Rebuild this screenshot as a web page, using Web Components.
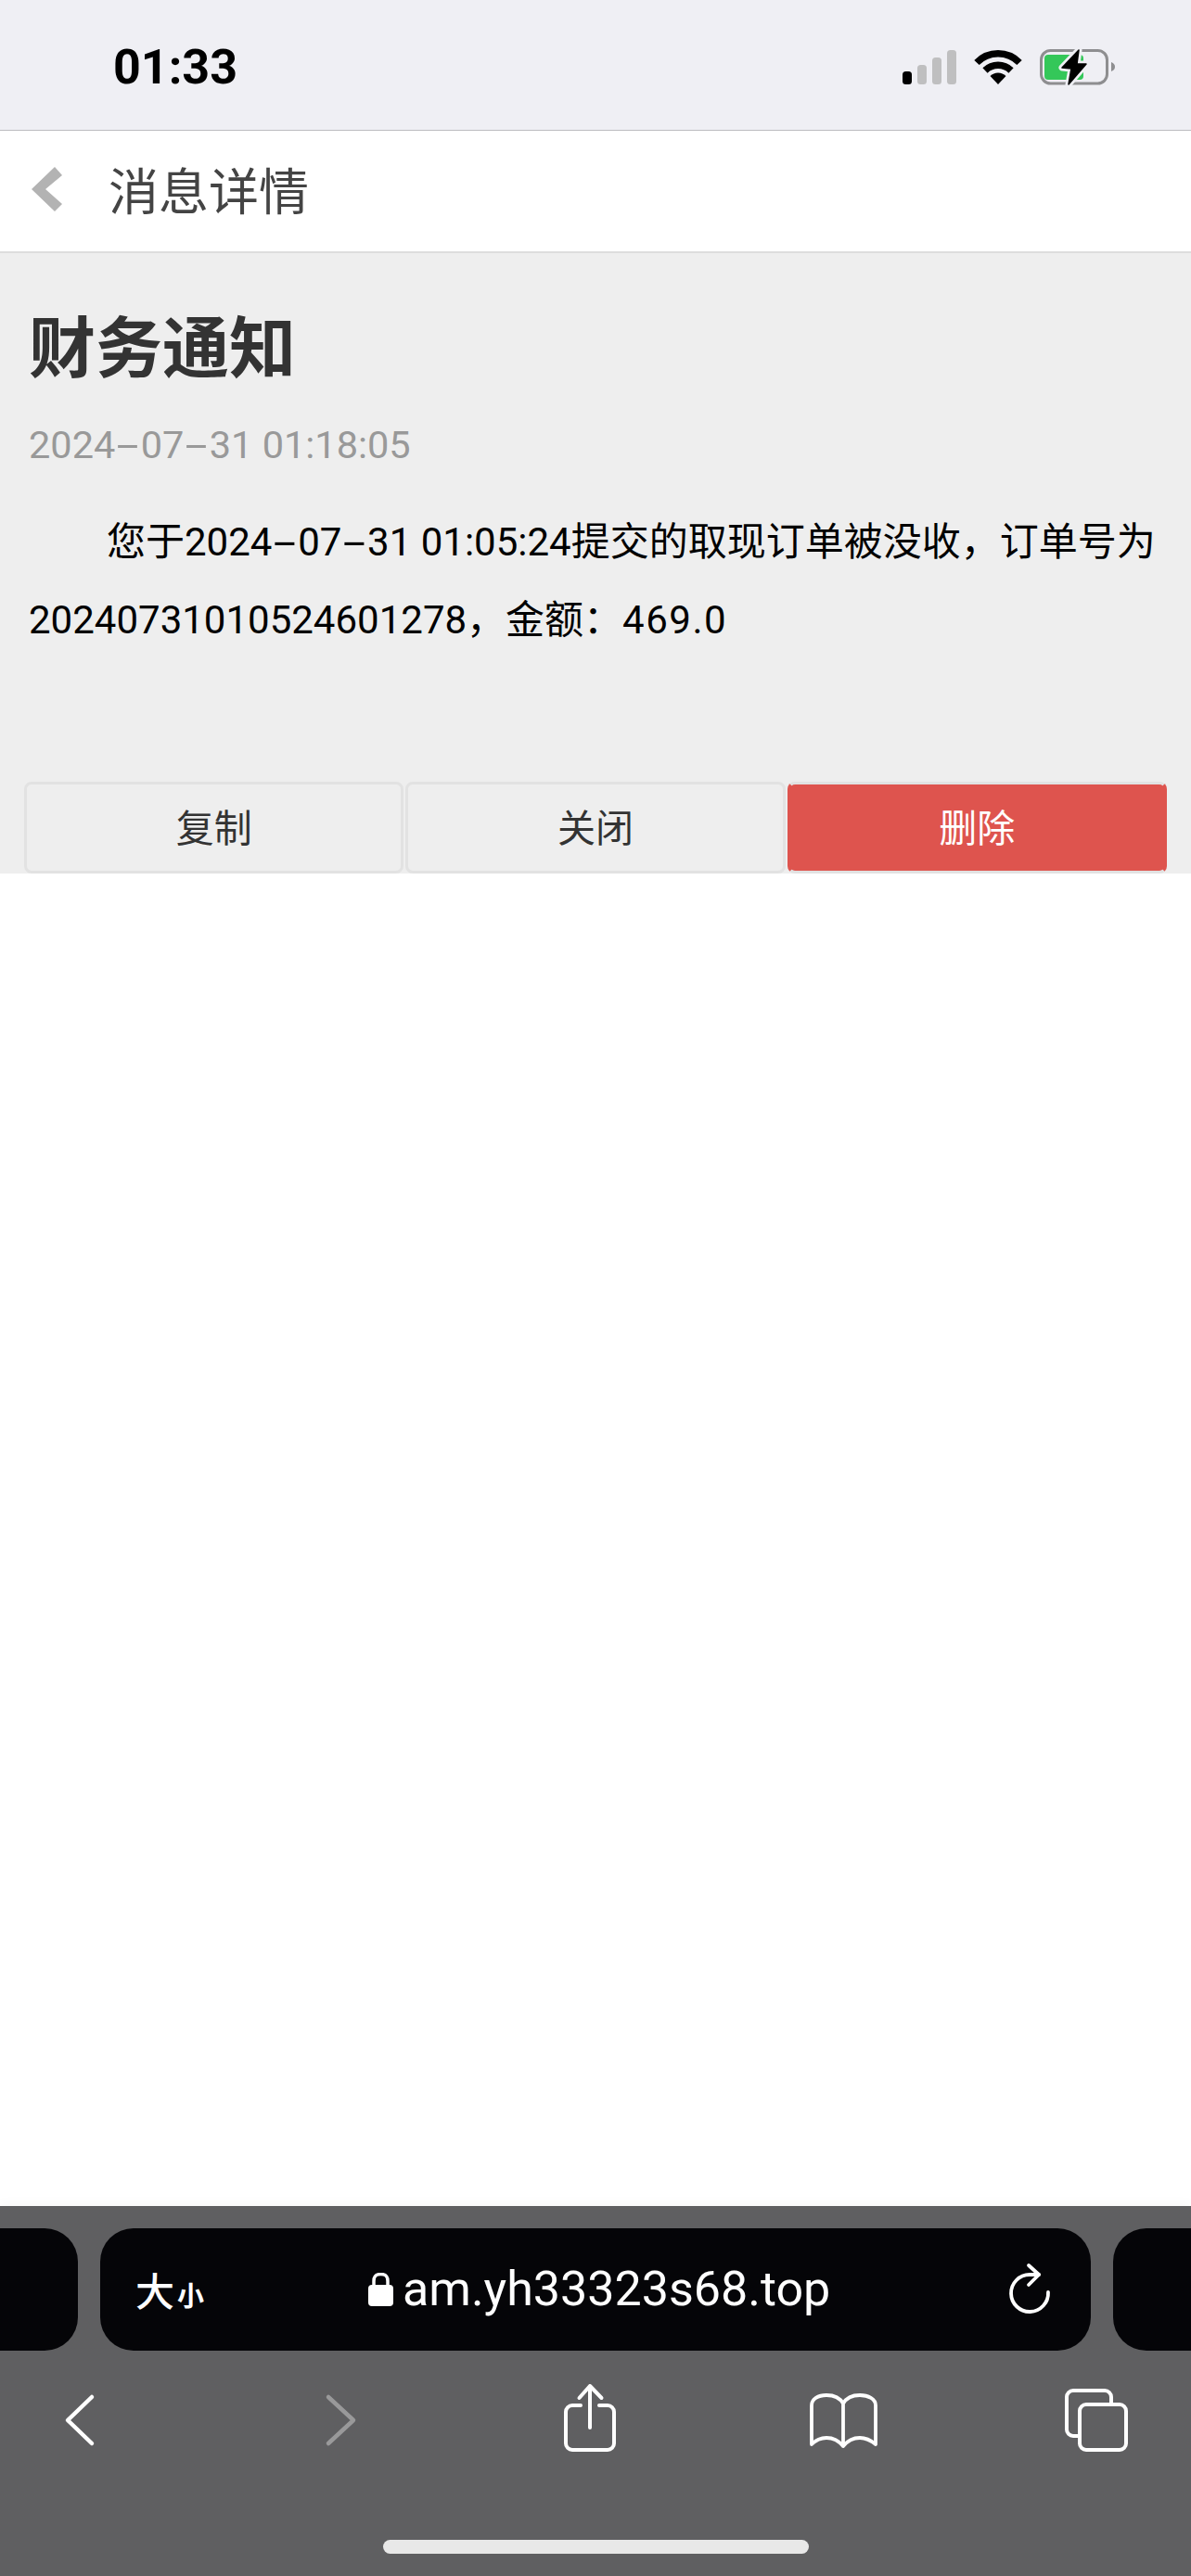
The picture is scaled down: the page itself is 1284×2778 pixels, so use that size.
<!DOCTYPE html>
<html lang="zh"><head><meta charset="utf-8"><title>消息详情</title>
<style>
html,body{margin:0;padding:0;background:#fff}
body{width:1284px;height:2778px;display:flex;flex-direction:column;font-family:Roboto,"Noto Sans CJK SC",sans-serif;overflow:hidden}
</style></head><body>
<x-status-bar></x-status-bar>
<x-nav-header>消息详情</x-nav-header>
<x-message-detail></x-message-detail>
<x-safari-bar></x-safari-bar>
<script>
function def(name, html){
  customElements.define(name, class extends HTMLElement{
    constructor(){super();this.attachShadow({mode:'open'}).innerHTML=html;}
  });
}
def('x-status-bar',`<style>
:host{display:flex;box-sizing:border-box;height:141px;background:#efeff4;border-bottom:1px solid #bcbcc0;align-items:flex-start;flex:none}
.t{font:700 52px/60px Roboto,sans-serif;color:#000;margin:43px 0 0 122px;letter-spacing:0}
svg{position:absolute;left:960px;top:40px}
</style><span class="t">01:33</span>
<svg width="260" height="64" viewBox="960 40 260 64">
<g fill="#bfbfc0"><rect x="989" y="70" width="10" height="21" rx="3.5"/><rect x="1005" y="62" width="10" height="29" rx="3.5"/><rect x="1021" y="54" width="10" height="37" rx="3.5"/></g>
<rect x="973" y="77" width="10" height="14" rx="3.5" fill="#000"/>
<g fill="none" stroke="#000" stroke-width="7.500"><path d="M1053 67.500A32 32 0 0 1 1099 67.500"/><path d="M1062 76A20 20 0 0 1 1090 76"/></g>
<path d="M1076 91L1067.500 82A12 12 0 0 1 1084.500 82Z" fill="#000"/>
<rect x="1122.500" y="54.500" width="71" height="35.500" rx="10" fill="none" stroke="#8e8e90" stroke-width="3"/>
<path d="M1198 67C1201 68 1202 70 1202 72C1202 74 1201 76 1198 77Z" fill="#8e8e90"/>
<rect x="1126" y="59" width="42" height="27" rx="4" fill="#34c759"/>
<path d="M1163 54L1145 73L1155 74L1152 91L1171 69L1161 69Z" fill="#efeff4" stroke="#efeff4" stroke-width="7" stroke-linejoin="round"/>
<path d="M1163 54L1145 73L1155 74L1152 91L1171 69L1161 69Z" fill="#000" stroke="#000" stroke-width="1.500" stroke-linejoin="round"/>
</svg>`);
def('x-nav-header',`<style>
:host{display:flex;box-sizing:border-box;height:132px;padding-bottom:5px;background:#fff;border-bottom:2px solid #ddd;align-items:center;flex:none}
svg{margin-left:34px;flex:none}
.t{margin-left:50px;font:400 54px/1 "Noto Sans CJK SC",sans-serif;color:#444}
</style><svg width="33" height="48" viewBox="34 180 33 48"><path d="M59 180L67 189L49 204L67 220L59 228L34 204Z" fill="#b3b3b3"/></svg><span class="t"><slot></slot></span>`);
def('x-action-button',`<style>
:host{display:flex;align-items:center;justify-content:center;box-sizing:border-box;height:99px;padding-bottom:5px;border:3px solid #e2e2e2;border-radius:8px;background:#eee;color:#333;font:400 41px/1 "Noto Sans CJK SC",sans-serif}
:host([danger]){background:#de544e;color:#fff;border-left-color:#de544e;border-right-color:#de544e}
</style><slot></slot>`);
def('x-message-detail',`<style>
:host{display:flex;flex-direction:column;box-sizing:border-box;height:669px;background:#eee;padding:47px 26px 0;flex:none}
.c{padding:0 5px;flex:1}
h1{margin:0;font:700 72px/100px "Noto Sans CJK SC",sans-serif;color:#333}
.date{margin-top:30px;font:400 41.500px/60px Roboto,"Noto Sans CJK SC",sans-serif;color:#999}
.body{margin:33px 0 0;font:400 42px/84px Roboto,"Noto Sans CJK SC",sans-serif;color:#000;text-indent:2em}
.d{display:inline-block;width:.66em;text-align:center;transform:scaleX(2.1);text-indent:0}
.amt{letter-spacing:1.500px}
.btns{display:grid;grid-template-columns:repeat(3,1fr);gap:2px}
</style><div class="c"><h1>财务通知</h1>
<div class="date">2024<span class="d">-</span>07<span class="d">-</span>31 01:18:05</div>
<p class="body">您于2024<span class="d">-</span>07<span class="d">-</span>31 01:05:24提交的取现订单被没收，订单号为<span>20240731010524601278，金额：<span class="amt">469.0</span></span></p></div>
<div class="btns"><x-action-button>复制</x-action-button><x-action-button>关闭</x-action-button><x-action-button danger>删除</x-action-button></div>`);
def('x-safari-bar',`<style>
:host{display:flex;flex-direction:column;box-sizing:border-box;height:399px;margin-top:auto;background:#5f5f61;padding-top:24px;box-shadow:0 -6px 8px rgba(0,0,0,.02);flex:none;overflow:hidden}
.row{display:flex;justify-content:center;gap:24px;flex:none}
.pill{flex:none;width:1068px;height:132px;box-sizing:border-box;background:#050508;border-radius:36px}
.main{display:grid;grid-template-columns:251px auto 1fr;align-items:center;padding:0 41px 0 38px;color:#fff}
.aa{display:flex;align-items:baseline;font:500 42px/1 "Noto Sans CJK SC",sans-serif}
.aa small{font-size:29px;margin-left:3px;font-weight:700}
.url{display:flex;align-items:center;gap:9px;font:400 52px/1 Roboto,sans-serif}
.rl{justify-self:end;display:block}
.tools{display:flex;margin-top:35px;flex:none}
.tools svg{display:block;flex:none}
.home{flex:none;width:459px;height:15px;border-radius:8px;background:#e8e8e8;margin:89px 0 0 413px}
</style>
<div class="row"><div class="pill"></div><div class="pill main">
<span class="aa">大<small>小</small></span>
<span class="url"><svg width="28" height="36" viewBox="397 2452 28 36" style="flex:none"><rect x="397" y="2465" width="27" height="23" rx="4" fill="#fff"/><path d="M403 2467V2461C403 2455 406 2453.500 410.500 2453.500C415 2453.500 418 2455 418 2461V2467" fill="none" stroke="#fff" stroke-width="3.500"/></svg>am.yh33323s68.top</span>
<svg class="rl" width="50" height="60" viewBox="1085 2438 50 60" fill="none" stroke="#fff" stroke-width="3.800" stroke-linecap="round" stroke-linejoin="round"><path d="M1130 2471A20 20 0 1 1 1110 2452H1120"/><path d="M1109 2442L1120 2452L1109 2463"/></svg>
</div><div class="pill"></div></div>
<div class="tools">
<svg style="margin-left:60px" width="60" height="80" viewBox="60 2570 60 80" fill="none" stroke="#fff" stroke-width="4.500" stroke-linecap="round" stroke-linejoin="round"><path d="M99 2585L73 2610L99 2635"/></svg>
<svg style="margin-left:220px" width="60" height="80" viewBox="340 2570 60 80" fill="none" stroke="#99999a" stroke-width="4.500" stroke-linecap="round" stroke-linejoin="round"><path d="M354 2585L381 2610L354 2635"/></svg>
<svg style="margin-left:200px" width="80" height="80" viewBox="600 2570 80 80" fill="none" stroke="#fff" stroke-width="4" stroke-linecap="round" stroke-linejoin="round"><path d="M626 2594H617A7 7 0 0 0 610 2601V2635A7 7 0 0 0 617 2642H655A7 7 0 0 0 662 2635V2601A7 7 0 0 0 655 2594H646"/><path d="M636 2618V2573M624.500 2586L636 2573L648.500 2586"/></svg>
<svg style="margin-left:180px" width="100" height="80" viewBox="860 2570 100 80" fill="none" stroke="#fff" stroke-width="3.800" stroke-linecap="round" stroke-linejoin="round"><path d="M909 2592C905 2585 897 2583 891 2583C882 2583 875 2587 875 2594V2636C880 2631 885 2629 891 2629C899 2629 905 2633 909 2638C913 2633 919 2629 927 2629C933 2629 938 2631 944 2636V2594C944 2587 936 2583 927 2583C921 2583 913 2585 909 2592V2638"/></svg>
<svg style="margin-left:180px" width="90" height="80" viewBox="1140 2570 90 80" fill="none" stroke="#fff" stroke-width="4" stroke-linejoin="round"><path d="M1163 2627H1157A7 7 0 0 1 1150 2620V2585A7 7 0 0 1 1157 2578H1191A7 7 0 0 1 1198 2585V2592"/><rect x="1164" y="2593" width="50" height="49" rx="7"/></svg>
</div>
<div class="home"></div>`);
</script></body></html>
